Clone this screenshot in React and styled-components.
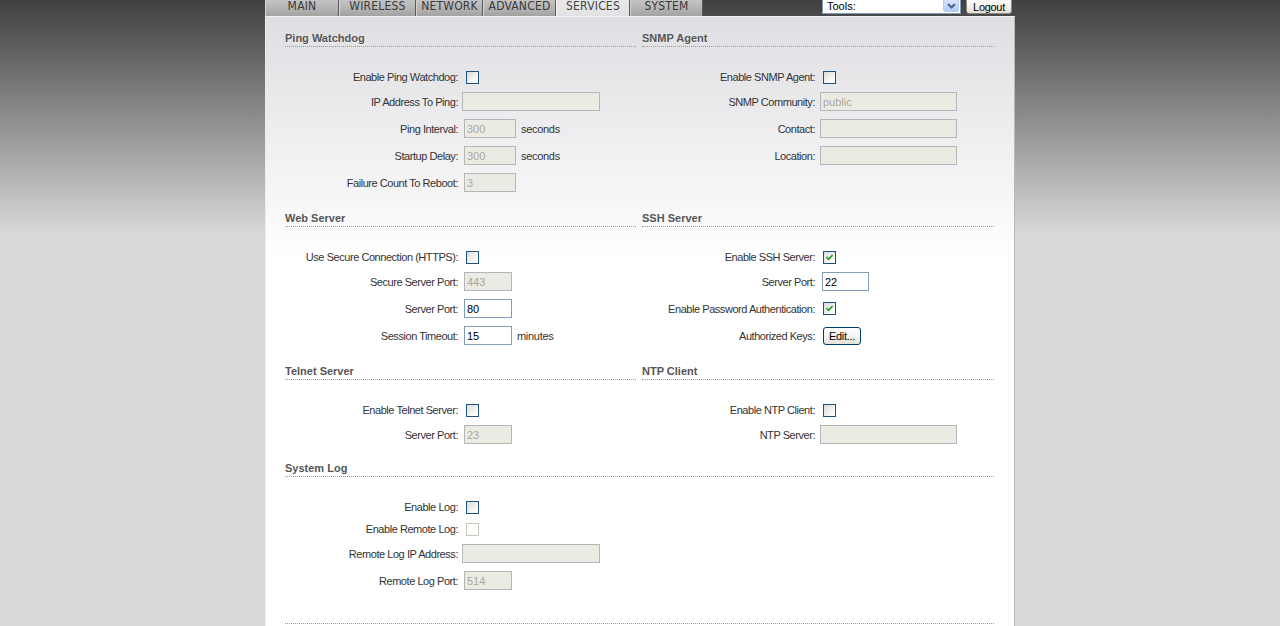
import React from 'react'
import styled, { createGlobalStyle } from 'styled-components'

const GlobalStyle = createGlobalStyle`
    html, body {
        margin: 0;
        padding: 0;
    }
    body {
        background-color: #dadada;
        background-image: linear-gradient(180deg, #404040 0px, #dadada 236px);
        background-repeat: no-repeat;
        font-family: "Liberation Sans", Arial, sans-serif;
        font-size: 11px;
        color: #333;
    }
`

const Page = styled.div`
    width: 750px;
    margin: 0 auto;
`

const TopBar = styled.div`
    display: flex;
    height: 16px;
    overflow: hidden;
`

const Tabs = styled.div`
    display: flex;
`

const Tab = styled.div`
    box-sizing: border-box;
    width: ${p => p.$w}px;
    height: 16px;
    border-right: 1px solid #5a5a5a;
    border-left: 1px solid ${p => (p.$active ? '#f4f4f4' : '#d2d2d2')};
    background: ${p => (p.$active
        ? 'linear-gradient(180deg, #e8e8e8 0%, #e2e2e4 100%)'
        : 'linear-gradient(180deg, #c4c4c4 0%, #b2b2b2 60%, #a2a2a2 100%)')};
    color: ${p => (p.$active ? '#444' : '#3a3a3a')};
    font-family: "Liberation Sans Narrow", "DejaVu Sans Condensed", "Liberation Sans", sans-serif;
    font-size: 12px;
    line-height: 12px;
    text-align: center;
    letter-spacing: 0.2px;
`

const Spacer = styled.div`
    flex: 1;
`

const ToolsSelect = styled.div`
    box-sizing: border-box;
    display: flex;
    width: 139px;
    height: 18px;
    margin-top: -4px;
    margin-right: 5px;
    background: #fff;
    border: 1px solid #7f9db9;
    color: #000;
`

const SelectText = styled.div`
    flex: 1;
    padding: 3px 0 0 4px;
    font-size: 11px;
`

const SelectArrow = styled.div`
    width: 16px;
    margin: 1px;
    border-radius: 2px;
    background: linear-gradient(180deg, #dbe6fd 0%, #b6cbf6 100%);
    border: 1px solid #b9cbf3;
    box-sizing: border-box;
    display: flex;
    align-items: flex-end;
    justify-content: center;
    padding-bottom: 2px;
`

const XpButton = styled.button`
    box-sizing: border-box;
    width: ${p => p.$w}px;
    height: ${p => p.$h}px;
    margin: 0;
    padding: 0;
    border: 1px solid ${p => p.$dark ? '#003c74' : '#8a8a8a'};
    border-radius: 3px;
    background: linear-gradient(180deg, #ffffff 0%, #f4f4f0 55%, #e3e1d6 100%);
    font-family: "Liberation Sans", Arial, sans-serif;
    font-size: 11px;
    color: #000;
    letter-spacing: -0.3px;
`

const EditButton = styled(XpButton)`
    margin-left: 2px;
`

const LogoutButton = styled(XpButton)`
    margin-top: -5px;
    margin-right: 3px;
    padding-top: 4px;
`

const Panel = styled.div`
    box-sizing: border-box;
    background: linear-gradient(180deg, #dfdfe3 0px, #f6f6f7 180px, #ffffff 240px);
    border-top: 1px solid #f2f2f2;
    border-left: 1px solid #ececec;
    border-right: 1px solid #b8b8b8;
    padding: 14px 20px 40px 19px;
`

const Pair = styled.div`
    display: grid;
    grid-template-columns: 351px 352px;
    column-gap: 6px;
    margin-bottom: ${p => p.$after}px;
`

const Single = styled.div`
    margin-bottom: ${p => p.$after}px;
`

const SectionTitle = styled.div`
    height: 15px;
    line-height: 15px;
    border-bottom: 1px dotted #9a9a9a;
    margin-bottom: 19px;
    font-weight: bold;
    font-size: 11px;
    color: #555;
    text-shadow: 0 1px 0 rgba(255, 255, 255, 0.6);
`

const Row = styled.div`
    display: grid;
    grid-template-columns: 175px 1fr;
    column-gap: 4px;
    align-items: center;
    height: ${p => p.$h}px;
    width: ${p => (p.$full ? '351px' : 'auto')};
`

const Label = styled.div`
    text-align: right;
    padding-right: 2px;
    letter-spacing: -0.45px;
    white-space: nowrap;
    color: #333;
`

const Value = styled.div`
    display: flex;
    align-items: center;
    gap: 5px;
`

const TextBox = styled.input`
    box-sizing: border-box;
    width: ${p => p.$w}px;
    height: 19px;
    margin: 0 0 0 ${p => p.$shift || 0}px;
    padding: 1px 2px 0;
    border: 1px solid ${p => (p.$off ? '#b3b7ba' : '#7f9db9')};
    background: ${p => (p.$off ? '#ebebe4' : '#ffffff')};
    color: ${p => (p.$off ? '#aca899' : '#000')};
    font-family: "Liberation Sans", Arial, sans-serif;
    font-size: 11px;
    outline: none;
`

const Unit = styled.span`
    color: #333;
    letter-spacing: -0.3px;
`

const Box = styled.span`
    box-sizing: border-box;
    display: inline-flex;
    align-items: center;
    justify-content: center;
    width: 13px;
    height: 13px;
    margin-left: 2px;
    border: 1px solid ${p => (p.$off ? '#cac8bb' : '#1c5180')};
    background: ${p => (p.$off ? '#ffffff' : 'linear-gradient(135deg, #dcdcd7 0%, #ffffff 90%)')};
`

const Footer = styled.div`
    border-top: 1px dotted #9a9a9a;
    width: 709px;
`

function Check({ checked, off }) {
    return (
        <Box $off={off}>
            {checked && (
                <svg width="9" height="9" viewBox="0 0 9 9">
                    <path d="M1.5 4.2 L3.5 6.3 L7.6 2" fill="none" stroke="#21a121" strokeWidth="1.8" />
                </svg>
            )}
        </Box>
    )
}

function Field({ item }) {
    if (item.type === 'check') return <Check checked={item.checked} off={item.off} />
    if (item.type === 'button') {
        return <EditButton $w={38} $h={18} $dark>{item.text}</EditButton>
    }
    return (
        <>
            <TextBox readOnly value={item.value || ''} $w={item.w} $off={item.off} $shift={item.shift} />
            {item.unit && <Unit>{item.unit}</Unit>}
        </>
    )
}

const rowHeight = (...items) => (items.some(i => i && i.type !== 'check') ? 27 : 22)

function FormRow({ item, h, full }) {
    if (!item) return <div />
    return (
        <Row $h={h} $full={full}>
            <Label>{item.label}</Label>
            <Value><Field item={item} /></Value>
        </Row>
    )
}

const pairs = [
    {
        after: 15,
        left: {
            title: 'Ping Watchdog',
            rows: [
                { label: 'Enable Ping Watchdog:', type: 'check' },
                { label: 'IP Address To Ping:', w: 138, off: true, shift: -2 },
                { label: 'Ping Interval:', w: 52, off: true, value: '300', unit: 'seconds' },
                { label: 'Startup Delay:', w: 52, off: true, value: '300', unit: 'seconds' },
                { label: 'Failure Count To Reboot:', w: 52, off: true, value: '3' },
            ],
        },
        right: {
            title: 'SNMP Agent',
            rows: [
                { label: 'Enable SNMP Agent:', type: 'check' },
                { label: 'SNMP Community:', w: 137, off: true, value: 'public', shift: -1 },
                { label: 'Contact:', w: 137, off: true, shift: -1 },
                { label: 'Location:', w: 137, off: true, shift: -1 },
            ],
        },
    },
    {
        after: 15,
        left: {
            title: 'Web Server',
            rows: [
                { label: 'Use Secure Connection (HTTPS):', type: 'check' },
                { label: 'Secure Server Port:', w: 48, off: true, value: '443' },
                { label: 'Server Port:', w: 48, value: '80' },
                { label: 'Session Timeout:', w: 48, value: '15', unit: 'minutes' },
            ],
        },
        right: {
            title: 'SSH Server',
            rows: [
                { label: 'Enable SSH Server:', type: 'check', checked: true },
                { label: 'Server Port:', w: 47, value: '22', shift: 1 },
                { label: 'Enable Password Authentication:', type: 'check', checked: true },
                { label: 'Authorized Keys:', type: 'button', text: 'Edit...' },
            ],
        },
    },
    {
        after: 13,
        left: {
            title: 'Telnet Server',
            rows: [
                { label: 'Enable Telnet Server:', type: 'check' },
                { label: 'Server Port:', w: 48, off: true, value: '23' },
            ],
        },
        right: {
            title: 'NTP Client',
            rows: [
                { label: 'Enable NTP Client:', type: 'check' },
                { label: 'NTP Server:', w: 137, off: true, shift: -1 },
            ],
        },
    },
]

const systemLog = {
    title: 'System Log',
    rows: [
        { label: 'Enable Log:', type: 'check' },
        { label: 'Enable Remote Log:', type: 'check', off: true },
        { label: 'Remote Log IP Address:', w: 138, off: true, shift: -2 },
        { label: 'Remote Log Port:', w: 48, off: true, value: '514' },
    ],
}

const tabs = [
    { name: 'MAIN', w: 74 },
    { name: 'WIRELESS', w: 77 },
    { name: 'NETWORK', w: 67 },
    { name: 'ADVANCED', w: 73 },
    { name: 'SERVICES', w: 74, active: true },
    { name: 'SYSTEM', w: 73 },
]

function SectionPair({ pair }) {
    const count = Math.max(pair.left.rows.length, pair.right.rows.length)
    const cells = []
    for (let i = 0; i < count; i++) {
        const l = pair.left.rows[i]
        const r = pair.right.rows[i]
        const h = rowHeight(l, r)
        cells.push(<FormRow key={'l' + i} item={l} h={h} />)
        cells.push(<FormRow key={'r' + i} item={r} h={h} />)
    }
    return (
        <Pair $after={pair.after}>
            <SectionTitle>{pair.left.title}</SectionTitle>
            <SectionTitle>{pair.right.title}</SectionTitle>
            {cells}
        </Pair>
    )
}

export default function App() {
    return (
        <>
            <GlobalStyle />
            <Page>
                <TopBar>
                    <Tabs>
                        {tabs.map(t => (
                            <Tab key={t.name} $w={t.w} $active={t.active}>{t.name}</Tab>
                        ))}
                    </Tabs>
                    <Spacer />
                    <ToolsSelect>
                        <SelectText>Tools:</SelectText>
                        <SelectArrow>
                            <svg width="9" height="6" viewBox="0 0 9 6">
                                <path d="M1 1 L4.5 4.5 L8 1" fill="none" stroke="#4d6185" strokeWidth="2" />
                            </svg>
                        </SelectArrow>
                    </ToolsSelect>
                    <LogoutButton $w={46} $h={19}>Logout</LogoutButton>
                </TopBar>
                <Panel>
                    {pairs.map(p => <SectionPair key={p.left.title} pair={p} />)}
                    <Single $after={29}>
                        <SectionTitle>{systemLog.title}</SectionTitle>
                        {systemLog.rows.map(r => (
                            <FormRow key={r.label} item={r} h={rowHeight(r)} full />
                        ))}
                    </Single>
                    <Footer />
                </Panel>
            </Page>
        </>
    )
}
